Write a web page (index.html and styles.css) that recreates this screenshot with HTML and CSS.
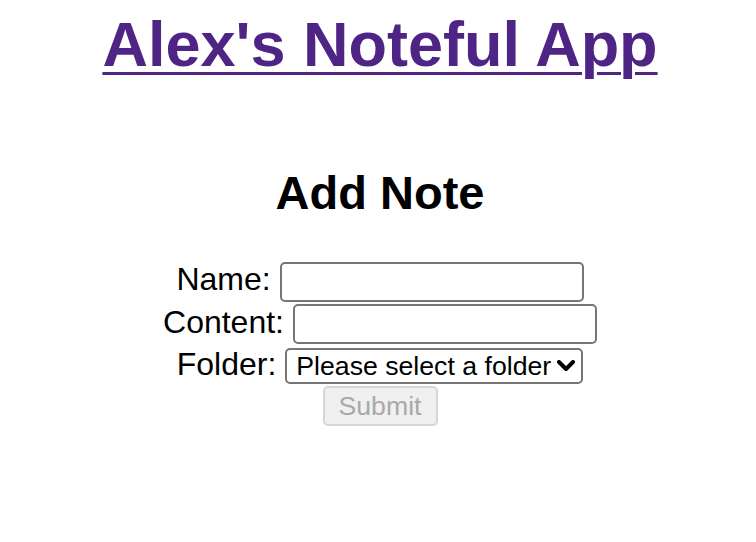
FILE: index.html
```html
<!DOCTYPE html>
<html lang="en">
<head>
<meta charset="utf-8">
<title>Alex's Noteful App</title>
<link rel="stylesheet" href="styles.css">
</head>
<body>
<div class="app">
  <header class="app-header">
    <h1 class="app-title"><a href="#" class="app-link">Alex's Noteful App</a></h1>
  </header>
  <main class="add-note">
    <h2 class="add-note-title">Add Note</h2>
    <form class="note-form">
      <div class="form-row">
        <label class="form-label" for="name">Name:</label>
        <input class="form-input" id="name" type="text">
      </div>
      <div class="form-row">
        <label class="form-label" for="content">Content:</label>
        <input class="form-input" id="content" type="text">
      </div>
      <div class="form-row">
        <label class="form-label" for="folder">Folder:</label>
        <span class="select-wrap">
          <select class="form-select" id="folder">
            <option>Please select a folder</option>
          </select>
          <svg class="select-chevron" width="18" height="12" viewBox="0 0 18 12" aria-hidden="true">
            <path d="M2 2 L9 9 L16 2" fill="none" stroke="#000" stroke-width="4" stroke-linecap="round" stroke-linejoin="round"/>
          </svg>
        </span>
      </div>
      <div class="form-row">
        <button class="submit-btn" type="submit" disabled>Submit</button>
      </div>
    </form>
  </main>
</div>
</body>
</html>
```
FILE: styles.css
```css
html, body {
  margin: 0;
  padding: 0;
  background: #fff;
}

body {
  font-family: "Liberation Sans", Arial, sans-serif;
  color: #000;
}

.app {
  padding-left: 4px;
  text-align: center;
}

.app-header {
  padding-top: 8px;
}

.app-title {
  margin: 0;
  font-size: 63px;
  font-weight: bold;
  line-height: normal;
}

.app-link {
  color: #4e2485;
  text-decoration: underline;
  text-decoration-thickness: 3px;
  text-underline-offset: 6px;
}

.add-note {
  padding-top: 85px;
}

.add-note-title {
  margin: 0;
  font-size: 47px;
  font-weight: bold;
  line-height: normal;
}

.note-form {
  margin-top: 41px;
  display: flex;
  flex-direction: column;
  gap: 2px;
}

.form-row {
  display: flex;
  justify-content: center;
  align-items: baseline;
  gap: 9px;
}

.form-label {
  font-size: 32px;
  line-height: normal;
}

.form-input {
  box-sizing: border-box;
  width: 304px;
  height: 40px;
  margin: 0;
  padding: 1px 4px;
  font-family: "Liberation Sans", Arial, sans-serif;
  font-size: 26.67px;
  border: 2px solid #767676;
  border-radius: 5px;
  background: #fff;
}

.select-wrap {
  position: relative;
  display: inline-block;
}

.form-select {
  -webkit-appearance: none;
  appearance: none;
  box-sizing: border-box;
  width: 298px;
  height: 36px;
  margin: 0;
  padding: 0 30px 0 9px;
  font-family: "Liberation Sans", Arial, sans-serif;
  font-size: 26.67px;
  color: #000;
  border: 2px solid #767676;
  border-radius: 5px;
  background: #fff;
}

.select-chevron {
  position: absolute;
  right: 8px;
  top: 12px;
  pointer-events: none;
}

.submit-btn {
  box-sizing: border-box;
  width: 115px;
  height: 40px;
  margin: 0;
  padding: 0;
  font-family: "Liberation Sans", Arial, sans-serif;
  font-size: 26.67px;
  color: #a9a9a9;
  background: #f0f0f0;
  border: 2px solid #d6d6d6;
  border-radius: 5px;
}
```
